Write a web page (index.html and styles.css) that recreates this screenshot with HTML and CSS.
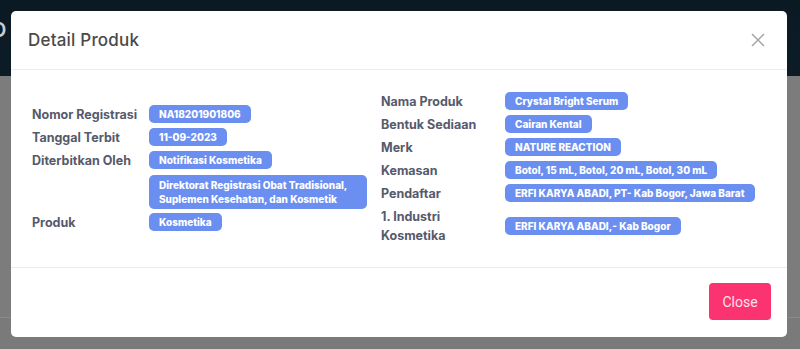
FILE: index.html
```html
<!DOCTYPE html>
<html lang="id">
<head>
  <meta charset="UTF-8" />
  <meta name="viewport" content="width=device-width, initial-scale=1" />
  <title>Detail Produk</title>
  <link rel="stylesheet" href="styles.css">
</head>
<body>
  <div class="backdrop">
    <span class="bg-letter">O</span>
  </div>

  <div class="modal">
    <div class="modal-header">
      <h2>Detail Produk</h2>
      <button class="close-x" aria-label="Close">
        <svg width="14" height="14" viewBox="0 0 14 14"><path d="M1 1L13 13M13 1L1 13" stroke="#a6a6a6" stroke-width="1.5" fill="none"/></svg>
      </button>
    </div>

    <div class="modal-body">
      <div class="col col-left">
        <div class="row">
          <div class="label">Nomor Registrasi</div>
          <div class="values"><span class="badge">NA18201901806</span></div>
        </div>
        <div class="row">
          <div class="label">Tanggal Terbit</div>
          <div class="values"><span class="badge">11-09-2023</span></div>
        </div>
        <div class="row top">
          <div class="label">Diterbitkan Oleh</div>
          <div class="values">
            <span class="badge">Notifikasi Kosmetika</span>
            <span class="badge wrap">Direktorat Registrasi Obat Tradisional, Suplemen Kesehatan, dan Kosmetik</span>
          </div>
        </div>
        <div class="row">
          <div class="label">Produk</div>
          <div class="values"><span class="badge">Kosmetika</span></div>
        </div>
      </div>

      <div class="col col-right">
        <div class="row">
          <div class="label">Nama Produk</div>
          <div class="values"><span class="badge">Crystal Bright Serum</span></div>
        </div>
        <div class="row">
          <div class="label">Bentuk Sediaan</div>
          <div class="values"><span class="badge">Cairan Kental</span></div>
        </div>
        <div class="row">
          <div class="label">Merk</div>
          <div class="values"><span class="badge">NATURE REACTION</span></div>
        </div>
        <div class="row">
          <div class="label">Kemasan</div>
          <div class="values"><span class="badge">Botol, 15 mL, Botol, 20 mL, Botol, 30 mL</span></div>
        </div>
        <div class="row">
          <div class="label">Pendaftar</div>
          <div class="values"><span class="badge">ERFI KARYA ABADI, PT- Kab Bogor, Jawa Barat</span></div>
        </div>
        <div class="row">
          <div class="label">1. Industri Kosmetika</div>
          <div class="values"><span class="badge">ERFI KARYA ABADI,- Kab Bogor</span></div>
        </div>
      </div>
    </div>

    <div class="modal-footer">
      <button class="btn-close">Close</button>
    </div>
  </div>
</body>
</html>
```

FILE: styles.css
```css
body {
  margin: 0;
  height: 349px;
  overflow: hidden;
  font-family: 'Inter', 'Noto Sans', sans-serif;
  background: linear-gradient(#0b1923 0, #0c1c27 76px, #7c7c7c 76px, #7c7c7c 317px, #8a8a8a 317px, #8a8a8a 318px, #7a7a7a 318px);
  position: relative;
}

.backdrop {
  position: absolute;
  inset: 0;
}

.bg-letter {
  position: absolute;
  left: -9px;
  top: 18px;
  color: #c9cdd1;
  font-size: 20px;
  font-weight: 600;
}

.modal {
  position: relative;
  margin: 11px 13px 0 11px;
  height: 326px;
  background: #fff;
  border-radius: 5px;
  display: flex;
  flex-direction: column;
}

.modal-header {
  height: 59px;
  box-sizing: border-box;
  padding: 0 22px 0 17px;
  display: flex;
  align-items: center;
  justify-content: space-between;
  border-bottom: 1px solid #ececec;
}

.modal-header h2 {
  margin: 0;
  font-size: 17px;
  font-weight: 500;
  color: #4a4a4a;
  letter-spacing: 0.2px;
}

.close-x {
  border: none;
  background: none;
  padding: 0;
  width: 14px;
  height: 14px;
  display: flex;
}

.modal-body {
  height: 198px;
  box-sizing: border-box;
  padding: 0 21px 1px;
  display: flex;
  align-items: center;
  border-bottom: 1px solid #ececec;
}

.col {
  display: flex;
  flex-direction: column;
  gap: 4px;
}

.col-left {
  width: 349px;
}

.col-left .label {
  width: 117px;
}

.col-right .label {
  width: 124px;
}

.row {
  display: flex;
  align-items: center;
}

.row.top {
  align-items: flex-start;
}

.label {
  flex-shrink: 0;
  font-size: 12.5px;
  font-weight: 700;
  color: #555a6c;
  line-height: 19px;
}

.values {
  display: flex;
  flex-direction: column;
  align-items: flex-start;
  gap: 6px;
}

.badge {
  display: inline-block;
  background: #6b8ff0;
  color: #fff;
  font-size: 10px;
  font-weight: 800;
  letter-spacing: 0;
  line-height: 14px;
  padding: 2px 10px;
  border-radius: 5px;
  white-space: nowrap;
}

.badge.wrap {
  white-space: normal;
  width: 198px;
  padding: 3px 10px;
  line-height: 14px;
}

.modal-footer {
  flex: 1;
  display: flex;
  align-items: center;
  justify-content: flex-end;
  padding: 0 16px 2px 0;
}

.btn-close {
  width: 62px;
  height: 37px;
  border: none;
  border-radius: 4px;
  background: #fb3371;
  color: #fde3ea;
  font-family: 'Roboto', sans-serif;
  font-size: 14px;
}
```
